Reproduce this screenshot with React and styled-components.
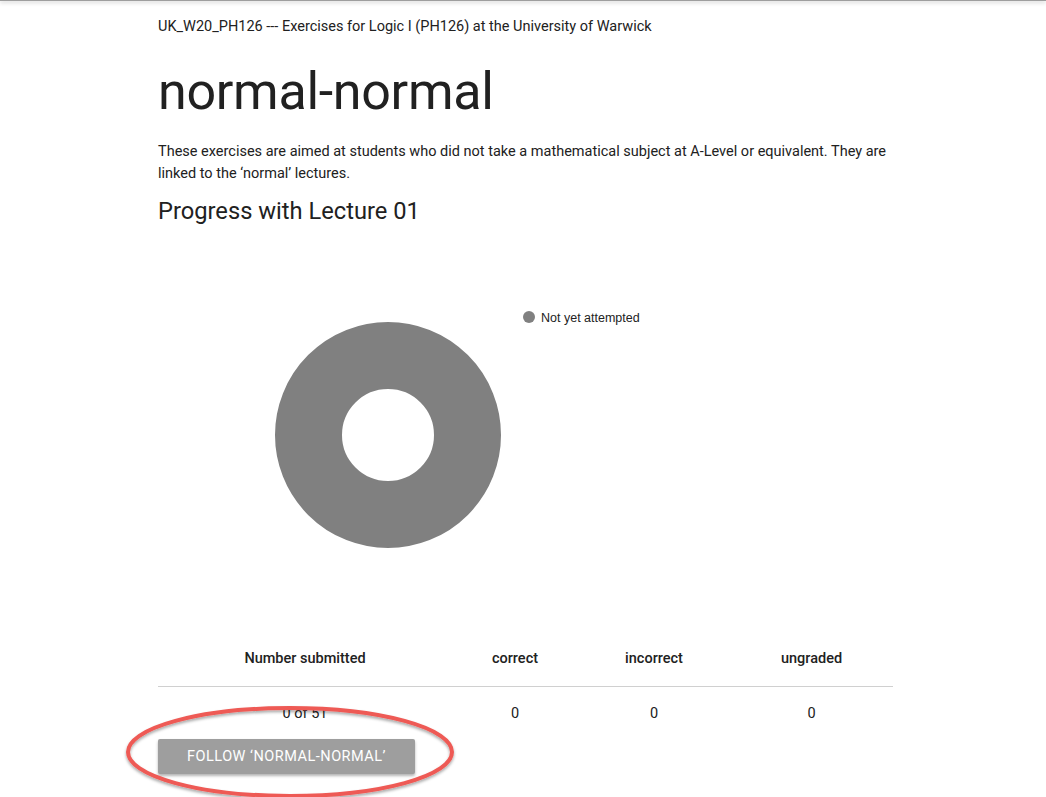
import styled, { createGlobalStyle } from "styled-components";

const GlobalStyle = createGlobalStyle`
  html, body {
    margin: 0;
    padding: 0;
    background: #fff;
    font-family: Roboto, "Liberation Sans", sans-serif;
    color: #212121;
    overflow: hidden;
  }
`;

const Page = styled.div`
  position: relative;
  width: 1046px;
  height: 797px;
  overflow: hidden;
`;

const AppBar = styled.div`
  height: 1px;
  background: #9e9e9e;
  box-shadow: 0 1px 4px rgba(0, 0, 0, 0.45);
`;

const Content = styled.main`
  width: 735px;
  margin-left: 158px;
`;

const Course = styled.div`
  font-size: 14.5px;
  line-height: 20px;
  padding-top: 16px;
`;

const Title = styled.h1`
  font-size: 52px;
  font-weight: 400;
  line-height: 60px;
  margin: 25px 0 19px;
  letter-spacing: -0.3px;
`;

const Intro = styled.p`
  font-size: 14.5px;
  line-height: 22px;
  margin: 0;
`;

const Sub = styled.h2`
  font-size: 23.7px;
  font-weight: 400;
  line-height: 32px;
  margin: 10px 0 6px;
`;

const ChartBox = styled.div`
  height: 398px;
`;

const Table = styled.div`
  display: grid;
  grid-template-columns: 294px 126px 152px 163px;
`;

const HeadCell = styled.div`
  height: 55px;
  display: flex;
  align-items: center;
  justify-content: center;
  font-size: 14.5px;
  font-weight: 500;
  border-bottom: 1px solid #d0d0d0;
`;

const Cell = styled.div`
  height: 52px;
  display: flex;
  align-items: center;
  justify-content: center;
  font-size: 14.5px;
`;

const FollowButton = styled.button`
  display: block;
  width: 257px;
  height: 35px;
  border: none;
  border-radius: 2px;
  background: #9e9e9e;
  color: #fff;
  font-family: Roboto, "Liberation Sans", sans-serif;
  font-size: 14.5px;
  letter-spacing: 0.5px;
  text-transform: uppercase;
  box-shadow: 0 2px 3px rgba(0, 0, 0, 0.3);
`;

const Links = styled.div`
  display: flex;
  gap: 32px;
  margin-top: 22px;
  font-size: 14.5px;
  color: #29a8e0;
`;

const Annotation = styled.svg`
  position: absolute;
  left: 0;
  top: 0;
  pointer-events: none;
`;

function Donut() {
  return (
    <svg width="735" height="398" viewBox="0 0 735 398">
      <circle cx="230" cy="202" r="79.5" fill="none" stroke="#808080" strokeWidth="67" />
      <circle cx="371" cy="84" r="6" fill="#808080" />
      <text x="383" y="88.5" fontFamily="'Liberation Sans', Arial, sans-serif" fontSize="12.5" fill="#222">
        Not yet attempted
      </text>
    </svg>
  );
}

export default function App() {
  return (
    <Page>
      <GlobalStyle />
      <AppBar />
      <Content>
        <Course>UK_W20_PH126 --- Exercises for Logic I (PH126) at the University of Warwick</Course>
        <Title>normal-normal</Title>
        <Intro>
          These exercises are aimed at students who did not take a mathematical subject at A-Level or
          equivalent. They are linked to the ‘normal’ lectures.
        </Intro>
        <Sub>Progress with Lecture 01</Sub>
        <ChartBox>
          <Donut />
        </ChartBox>
        <Table>
          <HeadCell>Number submitted</HeadCell>
          <HeadCell>correct</HeadCell>
          <HeadCell>incorrect</HeadCell>
          <HeadCell>ungraded</HeadCell>
          <Cell>0 of 51</Cell>
          <Cell>0</Cell>
          <Cell>0</Cell>
          <Cell>0</Cell>
        </Table>
        <FollowButton>Follow ‘normal-normal’</FollowButton>
        <Links>
          <span>Lectures and exercises</span>
          <span>Course home</span>
        </Links>
      </Content>
      <Annotation width="1046" height="797">
        <defs>
          <filter id="sh" x="-10%" y="-20%" width="120%" height="140%">
            <feDropShadow dx="0" dy="2" stdDeviation="1.5" floodColor="#000" floodOpacity="0.35" />
          </filter>
        </defs>
        <ellipse cx="290" cy="752" rx="162" ry="44" fill="none" stroke="#ee5a55" strokeWidth="4" filter="url(#sh)" />
      </Annotation>
    </Page>
  );
}
